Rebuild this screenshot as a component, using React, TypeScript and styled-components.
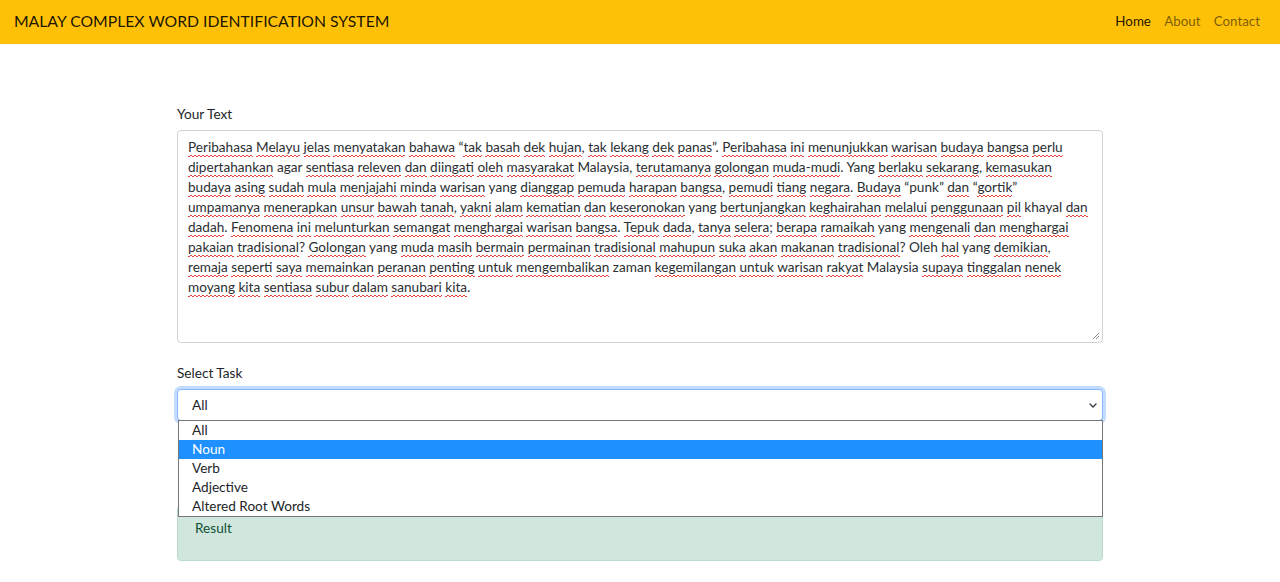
import React from "react";
import styled, { createGlobalStyle } from "styled-components";

const GlobalStyle = createGlobalStyle`
  html, body { margin: 0; padding: 0; background: #fff; }
  body {
    font-family: "Lato", "Open Sans", sans-serif;
    color: #212529;
    font-size: 13.6px;
    line-height: 20px;
  }
  * { box-sizing: border-box; }
`;

const Navbar = styled.nav`
  height: 44px;
  background: #ffc107;
  display: flex;
  align-items: center;
  justify-content: space-between;
  padding: 0 20px 2px 14px;
`;

const Brand = styled.a`
  font-size: 15.75px;
  line-height: 24px;
  color: rgba(0, 0, 0, 0.9);
  text-decoration: none;
`;

const NavList = styled.ul`
  display: flex;
  gap: 13.33px;
  list-style: none;
  margin: 0;
  padding: 0;
`;

const NavLink = styled.a<{ $active?: boolean }>`
  font-size: 13.33px;
  color: ${(p) => (p.$active ? "rgba(0,0,0,0.9)" : "rgba(0,0,0,0.55)")};
  text-decoration: none;
`;

const Main = styled.main`
  width: 926px;
  margin: 0 auto;
  padding-top: 60px;
`;

const Label = styled.label`
  display: block;
  margin-bottom: 6px;
`;

const Group = styled.div<{ $mb?: number }>`
  margin-bottom: ${(p) => p.$mb ?? 0}px;
`;

const TextBox = styled.div`
  position: relative;
  height: 213px;
  border: 1px solid #ced4da;
  border-radius: 4px;
  padding: 6px 10px;
  background: #fff;
  color: #2b2f33;
`;

const Line = styled.div`
  white-space: nowrap;
`;

const Miss = styled.span`
  padding-bottom: 2px;
  background-image:
    linear-gradient(135deg, transparent 0 35%, #e5423d 35% 65%, transparent 65% 100%),
    linear-gradient(45deg, transparent 0 35%, #e5423d 35% 65%, transparent 65% 100%);
  background-size: 4px 2px;
  background-position: 0 100%, 2px 100%;
  background-repeat: repeat-x;
`;

const Grip = styled.svg`
  position: absolute;
  right: 2px;
  bottom: 2px;
`;

const SelectWrap = styled.div`
  position: relative;
`;

const SelectBox = styled.div`
  height: 32px;
  border: 1px solid #86b7fe;
  border-radius: 4px;
  box-shadow: 0 0 0 3px rgba(13, 110, 253, 0.25);
  display: flex;
  align-items: center;
  justify-content: space-between;
  padding: 0 5px 0 14px;
  background: #fff;
`;

const Dropdown = styled.ul`
  position: absolute;
  left: 1px;
  right: 0;
  top: calc(100% - 1px);
  margin: 0;
  padding: 0;
  list-style: none;
  background: #fff;
  border: 1px solid #767676;
  z-index: 5;
`;

const Option = styled.li<{ $selected?: boolean }>`
  height: 19px;
  line-height: 19px;
  padding-left: 13px;
  background: ${(p) => (p.$selected ? "#1e90ff" : "#fff")};
  color: ${(p) => (p.$selected ? "#fff" : "#212529")};
`;

const Alert = styled.div`
  margin-top: 84px;
  height: 56px;
  padding: 12px 17px;
  background: #d1e7dd;
  border: 1px solid #badbcc;
  border-radius: 4px;
  color: #0f5132;
`;

const LINES = [
  "Peribahasa Melayu jelas menyatakan bahawa “tak basah dek hujan, tak lekang dek panas”. Peribahasa ini menunjukkan warisan budaya bangsa perlu",
  "dipertahankan agar sentiasa releven dan diingati oleh masyarakat Malaysia, terutamanya golongan muda-mudi. Yang berlaku sekarang, kemasukan",
  "budaya asing sudah mula menjajahi minda warisan yang dianggap pemuda harapan bangsa, pemudi tiang negara. Budaya “punk” dan “gortik”",
  "umpamanya menerapkan unsur bawah tanah, yakni alam kematian dan keseronokan yang bertunjangkan keghairahan melalui penggunaan pil khayal dan",
  "dadah. Fenomena ini melunturkan semangat menghargai warisan bangsa. Tepuk dada, tanya selera; berapa ramaikah yang mengenali dan menghargai",
  "pakaian tradisional? Golongan yang muda masih bermain permainan tradisional mahupun suka akan makanan tradisional? Oleh hal yang demikian,",
  "remaja seperti saya memainkan peranan penting untuk mengembalikan zaman kegemilangan untuk warisan rakyat Malaysia supaya tinggalan nenek",
  "moyang kita sentiasa subur dalam sanubari kita.",
];

const OK = new Set(["agar", "Malaysia", "Yang", "yang", "punk", "khayal", "Oleh", "zaman"]);

function renderLine(line: string) {
  const tokens = line.split(" ");
  return tokens.map((tok, i) => {
    const m = tok.match(/^([^A-Za-z]*)([A-Za-z][A-Za-z-]*[A-Za-z]|[A-Za-z])([^A-Za-z]*)$/);
    const sep = i < tokens.length - 1 ? " " : "";
    if (!m) return <React.Fragment key={i}>{tok + sep}</React.Fragment>;
    const [, pre, word, post] = m;
    return (
      <React.Fragment key={i}>
        {pre}
        {OK.has(word) ? word : <Miss>{word}</Miss>}
        {post + sep}
      </React.Fragment>
    );
  });
}

const OPTIONS = ["All", "Noun", "Verb", "Adjective", "Altered Root Words"];

export default function App() {
  return (
    <>
      <GlobalStyle />
      <Navbar>
        <Brand href="#">MALAY COMPLEX WORD IDENTIFICATION SYSTEM</Brand>
        <NavList>
          <li><NavLink $active href="#">Home</NavLink></li>
          <li><NavLink href="#">About</NavLink></li>
          <li><NavLink href="#">Contact</NavLink></li>
        </NavList>
      </Navbar>
      <Main>
        <Group $mb={20}>
          <Label>Your Text</Label>
          <TextBox>
            {LINES.map((l, i) => (
              <Line key={i}>{renderLine(l)}</Line>
            ))}
            <Grip width="8" height="8" viewBox="0 0 8 8">
              <path d="M7 1 L1 7 M7 4 L4 7" stroke="#8a8a8a" strokeWidth="1" />
            </Grip>
          </TextBox>
        </Group>
        <Group>
          <Label>Select Task</Label>
          <SelectWrap>
            <SelectBox>
              <span>All</span>
              <svg width="8" height="5" viewBox="0 0 8 5">
                <path d="M1 1 L4 4 L7 1" fill="none" stroke="#343a40" strokeWidth="1.3" strokeLinecap="round" strokeLinejoin="round" />
              </svg>
            </SelectBox>
            <Dropdown>
              {OPTIONS.map((o) => (
                <Option key={o} $selected={o === "Noun"}>{o}</Option>
              ))}
            </Dropdown>
          </SelectWrap>
        </Group>
        <Alert>Result</Alert>
      </Main>
    </>
  );
}
